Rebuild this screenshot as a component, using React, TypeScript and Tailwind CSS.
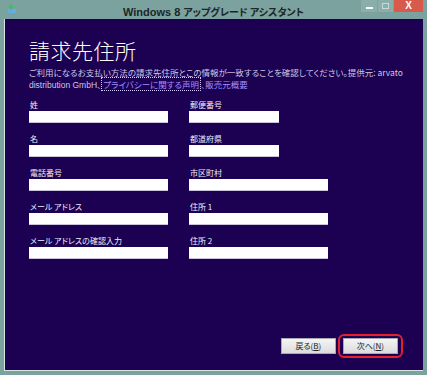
import React from "react";

const jp = "font-['Noto_Sans_CJK_JP','Noto_Sans',sans-serif] [font-feature-settings:'palt']";

function Field({ label, w }: { label: string; w: string }) {
  return (
    <div className="flex flex-col">
      <div className="h-[11px] leading-[11px] text-[8px] text-[#f0eef8] pl-[1px] mb-[1px] whitespace-nowrap">{label}</div>
      <div className={`h-[12px] bg-white border-b border-[#c9c4dc] ${w}`} />
    </div>
  );
}

export default function App() {
  return (
    <div className={`w-[427px] h-[375px] bg-[#7ba29e] flex flex-col overflow-hidden ${jp}`}>
      {/* title bar */}
      <div className="h-[19px] flex items-start relative">
        <div className="w-[18px] pl-[7px] pt-[4px]">
          <svg width="10" height="10" viewBox="0 0 10 10">
            <rect x="1" y="5" width="8" height="4" fill="#5fb0e0" />
            <path d="M4 1 L4 6 M2 3.5 L4 1 L6 3.5" stroke="#3fbf5f" strokeWidth="1.5" fill="none" />
          </svg>
        </div>
        <div className="flex-1 text-center pt-[2px] leading-[14px] font-bold text-[#1c2626] pr-[18px] whitespace-nowrap">
          <span className="font-['Liberation_Sans',sans-serif] text-[11px]">Windows 8 </span>
          <span className="text-[10px]">アップグレード アシスタント</span>
        </div>
        <div className="absolute right-[4px] top-0 flex h-[12px]">
          <div className="w-[16px] h-[12px] bg-[#8aaeaa] flex items-end justify-center pb-[3px]">
            <div className="w-[7px] h-[2px] bg-white" />
          </div>
          <div className="w-[15px] h-[12px] bg-[#8aaeaa] flex items-center justify-center ml-[1px]">
            <div className="w-[7px] h-[6px] border border-[#c8dad8]" />
          </div>
          <div className="w-[29px] h-[12px] bg-[#d75a4a] flex items-center justify-center ml-[1px] text-white text-[10px] leading-[10px] font-bold font-['Liberation_Sans',sans-serif]">
            X
          </div>
        </div>
      </div>

      {/* body */}
      <div className="flex-1 flex pl-[4px] pr-[5px] pb-[4px]">
        <div className="flex-1 flex flex-col bg-[#1c0052] border-l border-b border-[#d8e4e2] pl-[24px] pt-[18px] pr-[20px] pb-[12px]">
          <div className="text-[21px] leading-[26px] text-white font-light tracking-[0.5px]">請求先住所</div>
          <div className="mt-[3px] text-[8.5px] leading-[12px] text-[#cdc7e0] whitespace-nowrap">
            <div>ご利用になるお支払い方法の請求先住所とこの情報が一致することを確認してください。提供元: arvato</div>
            <div>
              <span className="font-['Liberation_Sans',sans-serif]">distribution GmbH</span>、
              <span className="text-[#a38fff] border border-dotted border-[#d0c8ff] px-[1px]">プライバシーに関する声明</span>
              <span className="text-[#a38fff]">、販売元概要</span>
            </div>
          </div>

          <div className="mt-[8px] grid grid-cols-[139px_139px] gap-x-[21px] gap-y-[10px]">
            <Field label="姓" w="w-[139px]" />
            <Field label="郵便番号" w="w-[90px]" />
            <Field label="名" w="w-[139px]" />
            <Field label="都道府県" w="w-[90px]" />
            <Field label="電話番号" w="w-[139px]" />
            <Field label="市区町村" w="w-[139px]" />
            <Field label="メール アドレス" w="w-[139px]" />
            <Field label="住所 1" w="w-[139px]" />
            <Field label="メール アドレスの確認入力" w="w-[139px]" />
            <Field label="住所 2" w="w-[139px]" />
          </div>

          <div className="mt-auto flex justify-end items-center gap-[2px]">
            <button className="flex items-center justify-center w-[55px] h-[16px] bg-gradient-to-b from-[#f4f4f4] to-[#dcdcdc] border border-[#a8a8b0] text-[8px] leading-[14px] text-[#202020]">
              <span>戻る(<span className="underline">B</span>)</span>
            </button>
            <div className="flex rounded-[6px] border-2 border-[#e3202c] px-[3px] py-[2px]">
              <button className="flex items-center justify-center w-[55px] h-[16px] bg-gradient-to-b from-[#f4f4f4] to-[#dcdcdc] border border-[#a8a8b0] text-[8px] leading-[14px] text-[#202020]">
                <span>次へ(<span className="underline">N</span>)</span>
              </button>
            </div>
          </div>
        </div>
      </div>
    </div>
  );
}
